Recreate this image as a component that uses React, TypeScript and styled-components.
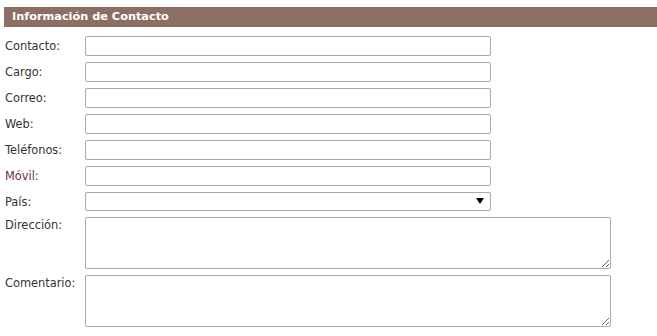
import React, {FC} from 'react';
import styled, {createGlobalStyle} from "styled-components";

const GlobalStyle = createGlobalStyle`
  html, body {
    margin: 0;
    padding: 0;
    background: #ffffff;
    font-family: "DejaVu Sans", Verdana, sans-serif;
  }
`;

const Page = styled.div`
  padding: 7px 0 0 4px;
  width: 653px;
`;

const SectionHeader = styled.div`
  height: 20px;
  background: #8c6f62;
  color: #ffffff;
  font-size: 11.3px;
  font-weight: 700;
  line-height: 20px;
  padding-left: 8px;
  margin-bottom: 9px;
`;

const Form = styled.div`
  display: flex;
  flex-direction: column;
  gap: 6px;
  padding-left: 1px;
`;

const Row = styled.div<{ $h: number; $top?: boolean }>`
  display: flex;
  align-items: ${p => (p.$top ? 'flex-start' : 'center')};
  height: ${p => p.$h}px;
`;

const Label = styled.label<{ $accent?: boolean; $top?: boolean }>`
  width: 80px;
  flex-shrink: 0;
  font-size: 11.4px;
  line-height: 14px;
  color: ${p => (p.$accent ? '#6e2f3c' : '#333333')};
  padding-top: ${p => (p.$top ? '1px' : '0')};
`;

const TextInput = styled.input`
  box-sizing: border-box;
  width: 406px;
  height: 20px;
  border: 1px solid #a9a9a9;
  border-radius: 2px;
  padding: 1px 4px;
  font-family: inherit;
  font-size: 11px;
  outline: none;
`;

const SelectWrap = styled.div`
  position: relative;
  width: 406px;
  height: 19px;
`;

const Select = styled.select`
  box-sizing: border-box;
  display: block;
  width: 100%;
  height: 19px;
  margin: 0;
  border: 1px solid #a9a9a9;
  border-radius: 2px;
  background: #ffffff;
  appearance: none;
  font-family: inherit;
  font-size: 11px;
  outline: none;
`;

const Arrow = styled.svg`
  position: absolute;
  right: 7px;
  top: 5px;
  pointer-events: none;
`;

const TextArea = styled.textarea`
  box-sizing: border-box;
  width: 526px;
  height: 52px;
  margin: 0;
  border: 1px solid #a9a9a9;
  border-radius: 2px;
  font-family: inherit;
  font-size: 11px;
  outline: none;
  display: block;
`;

const fields = [
    {label: 'Contacto:'},
    {label: 'Cargo:'},
    {label: 'Correo:'},
    {label: 'Web:'},
    {label: 'Teléfonos:'},
    {label: 'Móvil:', accent: true},
];

const App: FC = () => {
    return (
        <>
            <GlobalStyle/>
            <Page>
                <SectionHeader>Información de Contacto</SectionHeader>
                <Form>
                    {fields.map(f => (
                        <Row key={f.label} $h={20}>
                            <Label $accent={f.accent}>{f.label}</Label>
                            <TextInput type="text"/>
                        </Row>
                    ))}
                    <Row $h={19}>
                        <Label>País:</Label>
                        <SelectWrap>
                            <Select defaultValue="">
                                <option value=""></option>
                            </Select>
                            <Arrow width="8" height="8" viewBox="0 0 8 8">
                                <path d="M0 1 H8 L4 7 Z" fill="#000"/>
                            </Arrow>
                        </SelectWrap>
                    </Row>
                    <Row $h={52} $top>
                        <Label $top>Dirección:</Label>
                        <TextArea/>
                    </Row>
                    <Row $h={52} $top>
                        <Label $top>Comentario:</Label>
                        <TextArea/>
                    </Row>
                </Form>
            </Page>
        </>
    );
};

export default App;
